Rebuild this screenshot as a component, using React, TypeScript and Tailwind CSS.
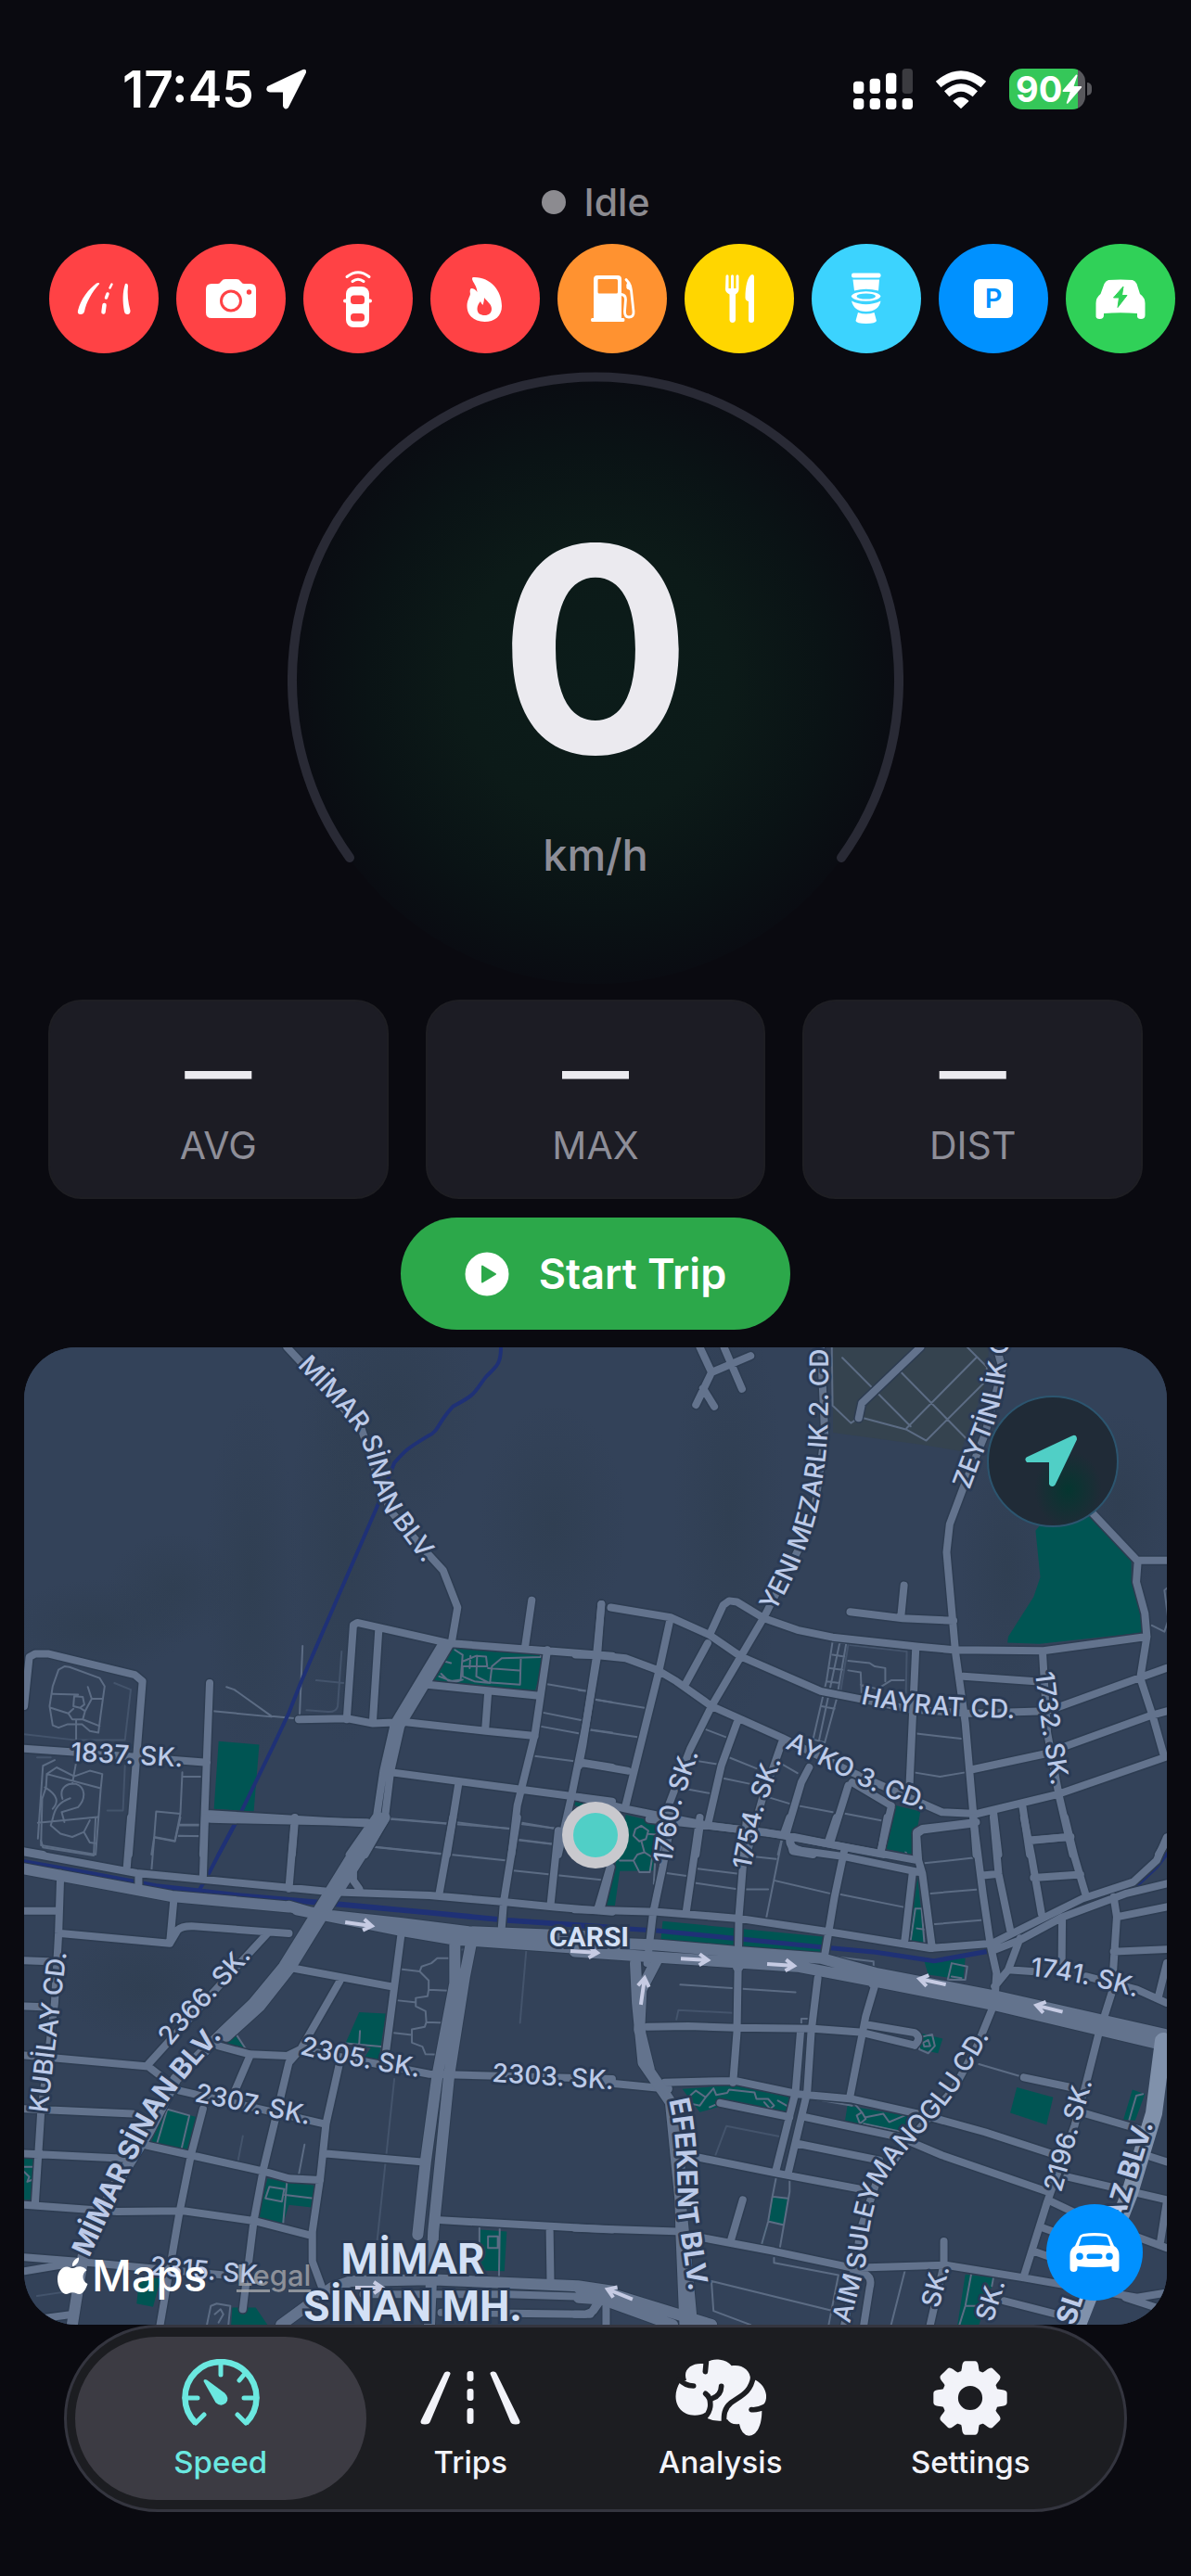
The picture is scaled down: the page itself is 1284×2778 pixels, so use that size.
import React from 'react';

interface MapTile {
  id: string;
  transform: string;
  areas: string;
  river: string;
  streets: string;
  wide: string;
  paths: string;
  faint: string;
}

interface RoadLabel {
  id: string;
  text: string;
  d: string;
  major?: boolean;
}

const tiles: MapTile[] = [
  {
    id: 'nw',
    transform: 'translate(-26 -13) scale(0.4209 0.3571)',
    areas:
      'M1160 942L1395 962L1370 1078L1110 1045Z M560 1226L664 1236L650 1438L548 1430Z M1470 1405L1495 1410L1495 1425L1470 1420Z',
    river:
      'M1283 36C1283 90 1270 95 1245 125C1215 170 1225 175 1160 215C1120 265 1125 290 1095 305C1040 345 1040 345 1010 385L965 520L770 1050L740 1140L700 1240L605 1470L560 1568',
    streets:
      'M735 36L762 70L925 280L965 420L1000 530L1100 665L1135 710L1172 822L1157 925 M888 1160L905 875L915 868L1150 930L1568 968 M970 890L955 1165 M765 1160L888 1157L955 1172L1035 1168L1245 1195L1370 1210 M1362 800L1345 940 M1540 812L1530 970L1500 1180L1465 1385L1430 1568 M1402 950L1370 1205L1325 1420L1310 1568 M1095 1055L1375 1088 M1250 1080L1243 1190 M990 1318L1325 1370L1568 1408 M1490 1290L1568 1305 M1175 1350L1145 1568 M62 1120L75 972L90 962L125 962L345 1025L365 1045L330 1568 M62 1248L180 1258L530 1290 M537 1050L520 1568 M530 1445L950 1475 M755 1470L748 1568 M62 1558L110 1568 M1130 935L1010 1170L982 1315L965 1450L895 1568 M1152 935L1027 1180L1000 1320L985 1465L935 1568',
    wide: '',
    paths:
      'M1165 950L1185 965L1180 1040L1150 1045L1130 1022 M1125 1030L1165 1048L1185 1040 M1185 985L1220 968L1245 970L1248 1000L1185 1000 M1205 968L1203 1005 M1222 968L1220 1030 M1185 1000L1185 1030L1215 1045L1255 1050L1260 1000L1285 975L1385 972L1385 962 M1220 1030L1250 1048L1332 1055L1334 978 M1250 1005L1330 1012 M1140 985L1155 990 M775 938L767 1160 M580 1062L600 1070L695 1150L765 1158 M545 1135L695 1152 M150 1010L165 1000L178 1002L255 1035L268 1060L258 1145L252 1200L230 1195L210 1175L172 1175L150 1185L135 1178L127 1120L135 1060Z M135 1083L200 1085 M190 1090L212 1092L216 1115L205 1125L188 1120Z M130 1125L175 1142L188 1128 M175 1142L185 1160L212 1160L218 1135L205 1125 M195 1160L195 1220 M225 1062L235 1098L218 1135 M235 1098L262 1098 M212 1160L255 1180 M140 1283L110 1300L97 1520 M120 1325L145 1305L190 1332L230 1315L262 1325L258 1370L245 1568 M120 1325L118 1365L108 1400L105 1540L245 1568 M120 1325L258 1368 M195 1290L185 1355 M160 1400C150 1365 175 1350 195 1355C220 1365 220 1400 200 1425L158 1440L165 1470 M180 1398C150 1410 140 1430 135 1460L130 1480L155 1505L185 1515L215 1500L230 1465 M115 1365C150 1390 150 1410 135 1430 M97 1472L250 1455 M215 1500L230 1532L243 1534 M467 1320L462 1445L400 1438L395 1515L448 1527L462 1445 M467 1333L525 1333 M460 1480L520 1480 M458 1512L520 1512 M395 1515L388 1568 M1395 1052L1508 1075 M1385 1138L1488 1162 M1380 1180L1485 1203 M1365 1270L1475 1287 M1525 1100L1568 1108 M1505 1190L1568 1200 M1000 1460L1310 1490 M955 1545L1145 1568 M1330 1475L1440 1492 M1325 1523L1430 1538',
    faint:
      'M875 955L865 1120Q862 1138 840 1137L785 1132 M810 1042L880 1050 M293 1050L335 1070L320 1222L190 1222L62 1205 M320 1300L315 1435L275 1435 M95 1275L130 1275',
  },
  {
    id: 'ne',
    transform: 'translate(598 -13) scale(0.4209 0.3571)',
    areas:
      'M1170 590L1200 545L1310 540L1415 670L1415 740L1440 840L1442 898L1180 932L1098 928L1100 910L1165 790L1182 730Z M805 1418L875 1438L855 1568L785 1550Z M120 1448L200 1470L190 1568L110 1568Z M0 1405L15 1412L0 1430Z',
    river: '',
    streets:
      'M310 36L340 112L440 62 M340 112L300 210 M318 160L347 215 M372 36L418 162 M620 36L630 300L600 560L475 850L415 970L340 1120L285 1250L230 1420L200 1568 M875 36L725 205L717 250 M1070 36L1085 100L1040 300L985 460L950 570L942 655L965 960L990 1170L1010 1440L1018 1568 M695 835L830 855L960 862 M833 755L825 850 M82 822L235 852L335 905L415 970L620 1075L720 1098L850 1130L1000 1142L1200 1135L1435 1035L1506 1005 M-8 965L50 967L120 975L200 1010L250 1045L340 1120L520 1215L700 1320L930 1440L1020 1445L1230 1385L1500 1275L1470 1150L1438 1035L1455 910 M58 812L45 970L10 1240L0 1300 M235 852L205 1015L120 1420 M335 905L370 815L385 802L405 805L475 855L560 890L650 912L870 940L960 950L1190 953L1455 910L1450 840L1428 745L1432 680L1506 680 M1430 680L1310 530 M330 930L270 1060 M863 945L847 1360 M1188 960L1200 1200L1230 1390L1265 1568 M985 1030L1170 1045 M1005 1312L1190 1265L1460 1150L1506 1135 M0 1290L125 1315 M0 1395L120 1430L330 1480L530 1510L700 1550L780 1568 M405 1170L365 1300L330 1480 M520 1230L470 1400L430 1568 M590 1305L570 1350L530 1510 M690 1360L645 1530 M310 1485L300 1568 M800 1425L775 1550 M700 1350L800 1420 M865 1568L865 1500L880 1490L1018 1470 M1062 1440L1075 1568 M1137 1425L1155 1568 M1155 1525L1255 1515 M1520 1500L1485 1568 M540 1520L548 1558L600 1568',
    wide: '',
    paths:
      'M675 68L850 275 M820 105L995 315 M1020 65L840 280 M1045 135L890 318L840 285L720 247L697 265L650 212L648 36 M995 36L1045 95L1045 130 M650 925L685 930L660 1100L630 1230L600 1220L635 1040Z M668 930L615 1225 M650 965L680 970 M643 1005L675 1010 M635 1045L668 1050 M622 1120L655 1128 M690 983L745 990L758 1000L785 1005L785 1045 M690 1012L722 1018L724 1078 M722 1055L765 1068L800 1042L833 1042 M40 1100L168 1125 M20 1190L150 1213 M0 1072L20 1075 M318 1187L380 1215 M385 1275L455 1308 M370 1338L440 1355 M300 1285L355 1295 M275 1370L335 1383 M520 1295L560 1322 M485 1395L550 1418L650 1440 M675 1443L775 1465 M865 1203L980 1218 M858 1320L925 1333L990 1320 M1510 760L1500 770L1510 860L1500 895L1468 876 M150 1490L165 1485L175 1500L168 1520L150 1522L142 1505Z M175 1508L195 1508 M160 1522L168 1560 M520 1520L510 1568 M790 1502L818 1508L840 1568',
    faint: 'M695 935L840 955L838 1080 M690 935L670 1080',
  },
  {
    id: 'sw',
    transform: 'translate(-26 507) scale(0.4209 0.3571)',
    areas:
      'M920 588L988 592L970 735L935 722L950 695L885 682Z M600 655L630 700L575 690Z M425 880L505 905L490 1008L385 985Z M685 1090L808 1112L803 1178L740 1170L725 1228L660 1210Z M62 1027L88 1027L82 1155L62 1155Z M1230 1245L1298 1250L1292 1370L1228 1368Z M355 1410L398 1370L410 1400L392 1478L350 1468Z M595 1480L655 1480L685 1532L592 1532Z M1568 170L1545 270L1568 270Z',
    river:
      'M605 10L530 180L510 220 M62 132L230 167L400 205L600 232L860 258L1100 285L1300 308L1568 330 M62 137L230 172L400 210L600 237L860 264L1100 290L1300 313L1568 334',
    streets:
      'M62 105L350 168L740 212L850 225L1100 235L1290 255L1420 270L1568 285 M335 0L325 150 M355 170L355 215 M525 0L520 180 M755 0L740 215 M540 5L940 15 M1160 0L1125 230 M1325 0L1290 255L1285 330 M1430 40L1410 265 M1565 150L1540 270 M155 170L150 350L140 560L105 890L90 1165 M62 282L145 282 M155 350L435 380L455 340Q465 328 490 328L740 350 M445 250L435 380 M685 350L560 510L380 745 M62 432L125 435 M62 570L110 572 M62 718L380 752L460 825L830 925 M62 880L340 895 M62 1015L320 1030 M62 1170L300 1190L470 1188L650 1218L795 1262 M62 1328L190 1340L600 1385 M62 1370L190 1345 M62 1520L190 1500 M750 455L1000 510 M870 495L770 700L740 740L675 1060L650 1218L622 1485 M1030 330L985 740 M870 740L835 925L820 1090L800 1250L800 1340L825 1420 M560 690L640 715L735 720L770 700L1100 775L1568 790 M640 720L600 830 M520 880L490 1015L460 1190L410 1532 M375 990L490 1020L680 1070L740 1090L820 1095 M835 1015L1080 1040 M1115 1215L1568 1245 M1408 1250L1410 1395 M930 1440L1300 1440L1568 1450 M1130 1495L1500 1500L1520 1490L1535 1465 M905 150L905 190L920 215',
    wide: 'M62 155L440 238L740 270 M740 268L810 292L1030 320L1200 345L1568 362 M760 278L1030 342L1160 368L1568 402 M970 0L895 130L840 235L727 450L650 560L570 650L450 790L380 950L290 1120L215 1310L185 1532 M985 0L905 150L855 240L745 450L665 570L580 660 M1165 345L1165 500L1120 780L1090 1040L1070 1260 M1210 360L1190 480L1150 780L1110 1250L1100 1532 M720 1532L850 1420L900 1400L1100 1395L1480 1415L1568 1430',
    paths:
      'M245 0L240 115L110 90L105 70 M395 60L388 160 M395 60L448 72L462 0 M460 22L520 22 M458 55L520 57 M1025 458L1075 465L1080 450L1105 440L1120 425L1155 425 M1075 465L1098 492L1098 520L1148 523 M1098 520L1095 540L1065 545L1065 570L1090 585L1092 618L1140 620 M1015 552L1062 558 M1092 618L1088 632L1055 640L1055 680L1082 692L1090 715L1125 716 M1003 650L1055 657 M780 988L765 1080 M955 88L1300 130 M1000 5L1160 20 M1170 15L1310 35 M1330 15L1430 35 M1325 68L1425 82 M1315 160L1540 188 M885 682L975 692 M922 645L920 685 M428 882L402 985 M425 880L485 900L465 1000 M735 1100L725 1228 M730 1140L803 1150 M690 1115L728 1122L722 1160L680 1150Z M62 1055L88 1055 M62 1070L75 1085L70 1100L88 1092 M605 655L630 700 M1228 1240L1228 1368 M1280 1240L1278 1395 M1250 1265L1275 1265L1275 1300L1250 1300Z M530 1532L540 1475L555 1468L590 1475L585 1532 M550 1500L565 1485L572 1500L560 1525',
    faint:
      'M1348 400L1332 620 M1010 790L965 1290 M622 962L610 1035 M1180 400L1210 395L1235 380 M95 1445L170 1432',
  },
  {
    id: 'se',
    transform: 'translate(598 507) scale(0.4209 0.3571)',
    areas:
      'M215 313L625 360L620 408L210 372Z M130 0L200 20L190 160L105 162L92 270L62 265Z M797 0L870 0L850 105L785 95Z M868 180L885 380L845 370Z M885 435L990 425L985 490L895 475Z M870 650L932 668L920 712L875 700Z M265 820L400 808L540 845L530 890L400 860L310 890Z M688 870L860 905L820 955L682 915Z M1122 815L1215 845L1198 928L1105 892Z M1418 822L1450 835L1425 915L1395 912Z M497 1145L535 1150L523 1232L487 1220Z M478 1235L483 1237L470 1290Z M990 1380L1065 1390L1025 1532L970 1532Z',
    river:
      'M-10 325L200 340L620 390L760 405L910 432L1060 400L1290 258L1430 205L1480 150L1506 110 M-10 328L200 343L620 393L760 408L910 435L1060 403',
    streets:
      'M-10 278L200 285L410 305L640 345L900 395L1060 380L1290 245L1420 195L1480 130L1506 60 M1065 400L1130 370L1240 300L1400 230L1506 200 M240 -10L215 150L190 290L175 440 M310 0L275 285 M430 0L410 300L408 440 M180 5L480 45L870 130 M540 70Q540 92 570 100L680 118L870 165 M540 0L525 50 M660 0L640 70 M680 100L655 240L630 415 M80 150L50 270 M855 165L835 370 M865 50L870 130L880 170L905 395 M865 50L880 38L1010 18 M790 0L775 95 M1010 0L1035 230L1055 390L1070 470L1065 560L1020 690L960 820L850 970L760 1110L720 1250L705 1400L680 1532 M1062 0L1075 170L1105 340 M1035 175L1075 170 M1140 0L1160 120L1185 290 M1245 0L1270 120L1300 240 M1155 70L1260 58 M1165 182L1285 172 M1370 240L1378 300L1365 530L1330 660L1300 800L1270 930L1200 1160L1140 1385 M1380 300L1506 270 M1370 405L1506 398 M1238 305L1237 435 M1130 365L1100 460L1065 510 M1100 460L1160 465 M1300 480L1430 520L1506 560 M1506 440L1485 540 M175 632L280 630L400 635L600 638L720 648L860 688 M735 625L860 650Q880 665 860 688 M408 440L405 650L395 800 M612 485L595 650L585 830L535 1080 M568 645L555 830L505 1065 M760 500L735 600L695 840 M220 800L400 795L560 835L700 850L870 895L1040 950L1210 1015 M362 862L540 905 M580 905L820 965L930 1020L1200 1130 M60 800L230 820 M560 985L770 1035 M300 1025L510 1075L720 1122 M420 1155L390 1275 M-10 1240L250 1250 M320 1270L500 1310L700 1360L940 1352L1140 1390L1430 1450L1506 1435 M935 1280L935 1350L900 1532 M1210 1160L1300 1210L1506 1300 M1165 1310L1250 1345 M1190 1240L1250 1265 M1250 1085L1506 1155 M1300 895L1460 950 M1440 1015L1506 1040 M1140 785L1260 815 M1506 1160L1490 1280 M1090 1460L1290 1520 M1400 1450L1506 1490 M700 1380L735 1380Q752 1390 745 1420L730 1532 M-10 1500L30 1500L55 1450 M70 1465L70 1532',
    wide: 'M-10 375L200 385L400 405L620 425L760 470L1070 540L1500 655 M-10 405L240 425L560 450L740 490L1060 565L1490 685 M1070 555L1495 670 M145 440L150 560L165 740L235 860L268 1250L290 1532 M200 430L160 520L155 640L180 760 M255 900L262 1250L272 1532 M0 1420L60 1430L340 1532 M0 1450L60 1455L240 1532 M408 410L408 450 M755 470L755 500',
    paths:
      'M260 505L555 528 M520 70L480 305 M500 190L645 230 M668 232L838 272 M305 155L410 170 M300 198L410 217L485 217 M450 118L505 125 M225 168L280 177 M885 138L1010 122 M895 230L1018 218 M905 323L1030 310 M340 1400L650 1490 M340 1405L345 1490L440 1532 M500 1330L500 1345L665 1382L640 1532 M835 1370L800 1532 M1025 745L1140 785 M650 420L755 435L755 460 M505 1090L495 1150L485 1220L468 1290 M540 1095L540 1130L515 1300 M497 1145L535 1150 M487 1220L523 1230 M570 630L570 608L588 608 M145 35L160 25L178 40L172 65L155 72L140 55Z M178 50L198 52 M160 70L168 105 M140 130L150 112L168 105L188 120L182 165L155 165Z M105 130L140 130 M195 140L192 200 M285 840L300 825L325 845L310 870L290 865Z M325 845L345 818L352 838L380 832L385 822L450 830L455 850L485 850L500 870L490 880L475 860 M510 855L535 872 M335 875L355 865 M700 855L725 890L735 910L720 925L712 900L725 890 M735 905L780 895L795 920L835 900 M730 925L830 950 M655 912L720 930 M600 850L700 870 M870 665L905 655L912 690L895 712L872 700Z M882 680L895 672L900 690L885 692Z M945 490L955 440L995 450L990 490Z M955 480L980 485 M862 275L850 370 M862 275L878 275L885 380 M866 335L885 338 M1445 835L1428 840L1410 912 M1005 1380L990 1475L975 1532 M990 1475L1020 1475 M1062 1390L1058 1415',
    faint: 'M250 610L255 582L395 590 M350 1020L378 932L520 965 M238 405L238 385 M615 440L615 455',
  },
];

const roadLabels: RoadLabel[] = [
  { id: 'mimar', text: 'MİMAR SİNAN BLV.', d: 'M294 20C335 62 356 84 365 104C376 134 378 164 394 184L445 252' },
  { id: 's1837', text: '1837. SK.', d: 'M50 446L240 456' },
  { id: 'yeni', text: 'YENI MEZARLIK 2. CD', d: 'M809 286C836 240 856 190 861 140C868 100 867 60 867 -40' },
  { id: 'zeytin', text: 'ZEYTİNLİK CD.', d: 'M1019 154L1040 98Q1060 50 1064 -40' },
  { id: 'hayrat', text: 'HAYRAT CD.', d: 'M902 384Q960 400 1120 401' },
  { id: 'ayko', text: 'AYKO 3. CD.', d: 'M820 432L890 466Q930 488 1010 512' },
  { id: 's1732', text: '1732. SK.', d: 'M1090 351L1097 408L1115 520' },
  { id: 's1760', text: '1760. SK.', d: 'M698 557L706 500L745 385' },
  { id: 's1754', text: '1754. SK.', d: 'M783 564L795 505L840 380' },
  { id: 'kubilay', text: 'KUBİLAY CD.', d: 'M25 826L52 600' },
  { id: 's2366', text: '2366. SK.', d: 'M158 754C180 725 210 700 270 628' },
  { id: 's2305', text: '2305. SK.', d: 'M297 762Q360 778 460 792' },
  { id: 's2303', text: '2303. SK.', d: 'M504 792L680 803' },
  { id: 's2307', text: '2307. SK.', d: 'M183 813L350 847' },
  { id: 's2315', text: '2315. SK.', d: 'M135 1000L300 1014' },
  { id: 's1741', text: '1741. SK.', d: 'M1085 678Q1140 682 1230 710' },
  { id: 's2196', text: '2196. SK.', d: 'M1118 912L1137 842L1170 730' },
  { id: 'suley', text: 'AIM SULEYMANOGLU CD.', d: 'M890 1053L907 989C912 930 920 905 947 871C975 840 1000 812 1016 785L1060 710' },
  { id: 'sk1', text: 'SK.', d: 'M986 1037L1006 960' },
  { id: 'sk2', text: 'SK.', d: 'M1044 1052L1070 970' },
  { id: 'mimar2', text: 'MİMAR SİNAN BLV.', d: 'M70 982L119 877C150 815 160 800 240 715', major: true },
  { id: 'efekent', text: 'EFEKENT BLV.', d: 'M695 812Q705 850 705 936L722 1053', major: true },
  { id: 'az', text: 'AZ BLV.', d: 'M1184 946L1232 790', major: true },
  { id: 'sl', text: 'SL', d: 'M1132 1056L1160 970', major: true },
];

const trafficArrows = [
  { x: 723, y: 660, angle: 3 },
  { x: 816, y: 666, angle: 4 },
  { x: 979, y: 684, angle: 192 },
  { x: 1105, y: 713, angle: 194 },
  { x: 667, y: 694, angle: -82 },
  { x: 361, y: 622, angle: 8 },
  { x: 604, y: 652, angle: 4 },
  { x: 372, y: 1014, angle: 0 },
  { x: 642, y: 1021, angle: 202 },
];

const hazardIcons = {
  road: (
    <g fill="none" stroke="#fff" strokeLinecap="round">
      <path d="M51 42.5q3-1 3.3.5C46 52 40 63 38 73q-1 3-4 3q-4 0-3-4C34 60 42 49 51 42.5z" fill="#fff" stroke="none" />
      <path d="M82 43q2.5-1 3 2C84 54 85 63 87.5 72q0 4-3 4q-3 0-3.5-3C79 62 79 52 82 43z" fill="#fff" stroke="none" />
      <path d="M67.5 43.5L65.5 47.5" strokeWidth="2.5" />
      <path d="M63 54L61.5 58" strokeWidth="3.5" />
      <path d="M59.5 66L58.5 73.5" strokeWidth="4.5" />
    </g>
  ),
  camera: (
    <>
      <path
        d="M38 43h7q2 0 3-2l1-1q1-2 4-2h12q3 0 4 2l1 1q1 2 3 2h7q6 0 6 6v25q0 6-6 6H38q-6 0-6-6V49q0-6 6-6z"
        fill="#fff"
      />
      <circle cx="59" cy="61.5" r="10.5" fill="none" stroke="#ff4245" strokeWidth="3" />
      <circle cx="78.5" cy="52" r="2.7" fill="#ff4245" />
    </>
  ),
  radar: (
    <>
      <g fill="none" stroke="#fff" strokeWidth="3" strokeLinecap="round">
        <path d="M53 40.5Q59 36 65 40.5" />
        <path d="M47 35.5Q59 26 71 35.5" />
      </g>
      <rect x="46" y="46" width="25" height="44" rx="8" fill="#fff" />
      <rect x="43" y="59.5" width="31" height="4" rx="2" fill="#fff" />
      <rect x="51" y="55.5" width="15" height="9.5" rx="3.5" fill="#ff4245" />
      <rect x="51" y="75" width="15" height="8.5" rx="3.5" fill="#ff4245" />
    </>
  ),
  flame: (
    <path
      fillRule="evenodd"
      fill="#fff"
      d="M46 36C64 35 77 50 77 67C77 78 69 84 58.5 84C47 84 39.5 77 39.5 67C39.5 61 42.5 57 43 54Q42 49 44 48Q48 48 50.5 52C50 45 46 42 45 38Q45 36 46 36zM58 58C58 62 57 64 56.5 66Q54.5 64 54 62C52 64 50.5 67 50.5 70C50.5 75 54 77 58.5 77C63 77 66 74.5 66 70C66 65 61 62 58 58z"
    />
  ),
  fuel: (
    <>
      <path
        fillRule="evenodd"
        fill="#fff"
        d="M43 34H65Q69 34 69 38V80H71Q72.5 80 72.5 82T71 84H37.5Q36 84 36 82T37.5 80H39V38Q39 34 43 34zM44.5 38Q43.5 38 43.5 39V52Q43.5 53.5 45 53.5H63.5Q65 53.5 65 52V39.5Q65 38 63.5 38z"
      />
      <path
        d="M69 54.5Q73.5 55 73.5 60L72.5 73Q72.5 79 77 79Q82.5 79 82 73L79.5 50Q79 45 77 42L74 38.5"
        fill="none"
        stroke="#fff"
        strokeWidth="2.8"
        strokeLinecap="round"
      />
      <path d="M76 41L79 50L75 48Q74 44 76 41z" fill="#fff" stroke="#fff" />
    </>
  ),
  food: (
    <>
      <path
        d="M44.5 34.5Q46 32 47.5 34.5V48H50V34.5Q51.5 32 53 34.5V48H55.5V34.5Q57 32 58.5 34.5V49Q58.5 52 55 54.5V82Q54.5 85 51.7 85T48.5 82V54.5Q44 52 44 49z"
        fill="#fff"
      />
      <path d="M73 33Q75 33 75 36V82Q75 85 72 85T69 82V62Q65.5 61 65.5 58C65.5 46 68 34 73 33z" fill="#fff" />
    </>
  ),
  toilet: (
    <g fill="#fff">
      <rect x="43" y="31.5" width="31.5" height="5" rx="2" />
      <path d="M44.5 38.5H73L72 50.5Q58.5 47 46 50.5z" />
      <path fillRule="evenodd" d="M42.7 56.5A16 6 0 0 1 74.5 56.5A16 6 0 0 1 42.7 56.5zM48.5 56.5A10 3 0 0 0 69 56.5A10 3 0 0 0 48.5 56.5z" />
      <path d="M43 61.5Q58.5 69 74.5 61.5C73 69 68 73 58.7 73S45 69 43 61.5z" />
      <path d="M50 74Q58.7 77 67.5 74L70 83Q69 86 58.7 86T47.5 83z" />
    </g>
  ),
  parking: (
    <>
      <rect x="38" y="38" width="42" height="42" rx="6" fill="#fff" />
      <text x="59" y="69" textAnchor="middle" fontSize="29" fontWeight="600" fill="#0091ff">
        P
      </text>
    </>
  ),
  charger: (
    <>
      <path
        d="M46 39Q59 38 72 39Q75 40 76.5 43L80 54Q85.5 58 85.5 64V77Q85.5 81 81 81T77 77V75Q59 73.5 41 75V77Q41 81 36.5 81T32.5 77V64Q32.5 58 37.5 54L41.5 43Q43 40 46 39z"
        fill="#fff"
      />
      <path d="M62 46L51.5 58H57.5L56 68.5L66 55.5H60.5z" fill="#30d158" stroke="#30d158" strokeLinejoin="round" />
    </>
  ),
};

const hazards = [
  { label: 'Road hazard', icon: hazardIcons.road, color: 'bg-[#ff4245]' },
  { label: 'Speed camera', icon: hazardIcons.camera, color: 'bg-[#ff4245]' },
  { label: 'Radar', icon: hazardIcons.radar, color: 'bg-[#ff4245]' },
  { label: 'Fire', icon: hazardIcons.flame, color: 'bg-[#ff4245]' },
  { label: 'Fuel', icon: hazardIcons.fuel, color: 'bg-[#ff9230]' },
  { label: 'Food', icon: hazardIcons.food, color: 'bg-[#ffd600]' },
  { label: 'Restroom', icon: hazardIcons.toilet, color: 'bg-[#3cd3fe]' },
  { label: 'Parking', icon: hazardIcons.parking, color: 'bg-[#0091ff]' },
  { label: 'Charging', icon: hazardIcons.charger, color: 'bg-[#30d158]' },
];

function StatusBar() {
  return (
    <header className="flex h-48 items-center justify-between pl-[132px] pr-[107px] text-white">
      <div className="flex items-center gap-3">
        <span className="text-[55px] leading-[64px] font-semibold">17:45</span>
        <svg className="h-[44px] w-[45px]" viewBox="0 0 45 44" aria-hidden="true">
          <path d="M41 2L3 20Q1 24 5 24.5H20V40Q21 44 24 41.5L43 4Q43.5 1 41 2z" fill="#fff" stroke="#fff" strokeWidth="2" strokeLinejoin="round" />
        </svg>
      </div>
      <div className="flex items-center gap-6">
        <svg className="h-[44px] w-[64px]" viewBox="63 39 192 132" aria-label="Signal">
          <g fill="#fff">
            <rect x="63" y="80" width="34" height="40" rx="11" />
            <rect x="116" y="71" width="34" height="49" rx="11" />
            <rect x="168" y="53" width="34" height="67" rx="11" />
            <rect x="63" y="135" width="34" height="36" rx="11" />
            <rect x="116" y="135" width="34" height="36" rx="11" />
            <rect x="168" y="135" width="34" height="36" rx="11" />
            <rect x="221" y="135" width="34" height="36" rx="11" />
          </g>
          <rect x="221" y="39" width="34" height="81" rx="11" fill="#3b3b40" />
        </svg>
        <svg className="h-[42px] w-[56px]" viewBox="325 40 168 126" aria-label="Wi-Fi">
          <path d="M336 88Q409 26 482 88" fill="none" stroke="#fff" strokeWidth="26" />
          <path d="M363 119Q409 78 455 119" fill="none" stroke="#fff" strokeWidth="24" />
          <path d="M386 142Q409 120 432 142L409 164Z" fill="#fff" stroke="#fff" strokeWidth="4" strokeLinejoin="round" />
        </svg>
        <div className="flex items-center gap-[2px]">
          <div className="flex h-[44px] w-[82px] items-center overflow-hidden rounded-[14px] bg-linear-to-r from-[#35c759] from-90% to-[#58585d] to-90% pl-[7px]">
            <span className="text-[38px] leading-[44px] font-bold">90</span>
            <svg className="h-[32px] w-[22px] shrink-0" viewBox="737 64 60 90" aria-hidden="true">
              <path d="M780 68L740 115H764L752 151L793 103H768z" fill="#fff" stroke="#fff" strokeWidth="5" strokeLinejoin="round" />
            </svg>
          </div>
          <span className="h-[14px] w-[5px] rounded-r-full bg-[#58585d]" />
        </div>
      </div>
    </header>
  );
}

function HazardRow() {
  return (
    <div className="flex gap-[19px] overflow-hidden px-[53px]">
      {hazards.map(({ label, icon, color }) => (
        <button key={label} type="button" aria-label={label} className={`size-[118px] shrink-0 rounded-full ${color}`}>
          <svg className="size-full" viewBox="0 0 118 118" aria-hidden="true">
            {icon}
          </svg>
        </button>
      ))}
    </div>
  );
}

function Speedometer() {
  return (
    <section className="relative mx-auto mt-5 flex size-[664px] flex-col items-center pt-[145px]">
      <svg className="absolute inset-0 size-full" viewBox="0 0 664 664" aria-hidden="true">
        <defs>
          <radialGradient id="glow">
            <stop offset="0" stopColor="#0c1c1a" />
            <stop offset="0.45" stopColor="#0c1a18" />
            <stop offset="0.75" stopColor="#0a1315" />
            <stop offset="1" stopColor="#0a0c12" />
          </radialGradient>
        </defs>
        <circle cx="332" cy="332" r="328" fill="url(#glow)" />
        <path d="M67 524A327 327 0 1 1 597 524" fill="none" stroke="#292a35" strokeWidth="10" strokeLinecap="round" />
      </svg>
      <span className="relative text-[308px] leading-[308px] font-bold text-[#ebeaef]">0</span>
      <span className="relative mt-11 text-[47px] leading-[48px] font-medium text-[#8e8e98]">km/h</span>
    </section>
  );
}

function StatCard({ label, value }: { label: string; value: string }) {
  return (
    <div className="flex flex-1 flex-col items-center rounded-[36px] border-2 border-[#1e1e23] bg-[#1c1c24] pt-[39px] pb-8">
      <span className="text-[72px] leading-[72px] font-bold text-[#ebeaef]">{value}</span>
      <span className="mt-5 text-[41px] leading-[48px] text-[#8e8e98]">{label}</span>
    </div>
  );
}

function MapCanvas() {
  return (
    <svg className="absolute inset-0 size-full" viewBox="0 0 1232 1054" preserveAspectRatio="xMidYMid slice" role="img" aria-label="Map">
      <defs>
        <radialGradient id="shade">
          <stop offset="0" stopColor="#2d3c4c" stopOpacity="0.5" />
          <stop offset="0.5" stopColor="#2d3c4c" stopOpacity="0.25" />
          <stop offset="1" stopColor="#2d3c4c" stopOpacity="0" />
        </radialGradient>
        {roadLabels.map(({ id, d }) => (
          <path key={id} id={`label-${id}`} d={d} />
        ))}
      </defs>
      <rect width="1232" height="1054" fill="#334259" />
      <g fill="url(#shade)">
        <ellipse cx="160" cy="260" rx="70" ry="60" />
        <ellipse cx="80" cy="300" rx="100" ry="50" />
        <ellipse cx="245" cy="250" rx="50" ry="200" />
        <ellipse cx="345" cy="210" rx="60" ry="220" />
        <ellipse cx="400" cy="60" rx="90" ry="140" />
        <ellipse cx="760" cy="180" rx="60" ry="230" />
        <ellipse cx="570" cy="190" rx="80" ry="130" />
        <ellipse cx="1060" cy="240" rx="50" ry="140" />
        <ellipse cx="1180" cy="170" rx="60" ry="100" />
        <ellipse cx="130" cy="690" rx="90" ry="60" />
      </g>
      <path d="M872 0H1040L1038 34L1010 112L968 105L872 92Z" fill="#35434f" />
      <g fill="none" strokeLinejoin="round" strokeLinecap="round">
        {tiles.map((tile) => (
          <g key={tile.id} transform={tile.transform}>
            <path d={tile.areas} fill="#005553" />
            <path d={tile.faint} stroke="#44546c" strokeWidth="2" vectorEffect="non-scaling-stroke" />
            <path d={tile.paths} stroke="#5c6c84" strokeWidth="2" vectorEffect="non-scaling-stroke" />
            <path d={tile.river} stroke="#1f3176" strokeWidth="4" vectorEffect="non-scaling-stroke" />
          </g>
        ))}
        {tiles.map((tile) => (
          <g key={tile.id} transform={tile.transform} stroke="#2d3c51">
            <path d={tile.streets} strokeWidth="11" vectorEffect="non-scaling-stroke" />
            <path d={tile.wide} strokeWidth="14" vectorEffect="non-scaling-stroke" />
          </g>
        ))}
        {tiles.map((tile) => (
          <g key={tile.id} transform={tile.transform} stroke="#63738d">
            <path d={tile.streets} strokeWidth="8" vectorEffect="non-scaling-stroke" />
            <path d={tile.wide} strokeWidth="12" vectorEffect="non-scaling-stroke" />
          </g>
        ))}
        <path d="M1228 748L1218 826L1192 912L1136 1054" stroke="#8091ab" strokeWidth="18" />
      </g>
      <g fill="none" stroke="#c6cbe3" strokeWidth="4">
        {trafficArrows.map(({ x, y, angle }) => (
          <path key={`${x}-${y}`} d="M-15 0H12M5 -6L14 0L5 6" transform={`translate(${x} ${y}) rotate(${angle})`} />
        ))}
      </g>
      <g fill="#bccae8" stroke="#2a3a54" strokeWidth="6" strokeLinejoin="round" className="[paint-order:stroke]">
        {roadLabels.map(({ id, text, major }) => (
          <text key={id} fontSize={major ? 30 : 28} fontWeight={major ? 700 : 500}>
            <textPath href={`#label-${id}`}>{text}</textPath>
          </text>
        ))}
      </g>
      <g
        fill="#d3e0f5"
        stroke="#2a3a54"
        strokeWidth="6"
        textAnchor="middle"
        fontWeight="700"
        className="font-['Roboto',sans-serif] [paint-order:stroke]"
      >
        <text x="609" y="646" fontSize="30">
          CARSI
        </text>
        <text x="419" y="999" fontSize="46">
          MİMAR
        </text>
        <text x="419" y="1050" fontSize="46">
          SİNAN MH.
        </text>
      </g>
      <circle cx="616" cy="526" r="36" fill="#c9c9ce" />
      <circle cx="616" cy="526" r="24" fill="#50cfc6" />
    </svg>
  );
}

function MapPanel() {
  return (
    <section className="relative mx-[26px] mt-[19px] aspect-[1232/1054] overflow-hidden rounded-[56px] bg-[#334259]">
      <MapCanvas />
      <button
        type="button"
        aria-label="Recenter"
        className="absolute top-[52px] right-[52px] flex size-[142px] items-center justify-center rounded-full border-2 border-[#2c556f] bg-[#1f2b37] bg-radial-[at_62%_72%] from-[#053630] to-[#202b37] to-30% pr-1"
      >
        <svg className="size-[60px]" viewBox="0 0 60 60" aria-hidden="true">
          <path d="M54 4L5 27Q4 28 5 29H30V54Q31 56 33 54L56 6Q56 3 54 4z" fill="#50cfc6" stroke="#50cfc6" strokeWidth="4" strokeLinejoin="round" />
        </svg>
      </button>
      <button
        type="button"
        aria-label="Vehicle"
        className="absolute right-[26px] bottom-[26px] flex size-[104px] items-center justify-center rounded-full bg-[#0091ff]"
      >
        <svg className="h-[42px] w-[54px]" viewBox="0 0 54 42" aria-hidden="true">
          <path
            fillRule="evenodd"
            fill="#fff"
            d="M15 1Q27-1 39 1Q43 2 44 5L48 14Q53.5 17 53.5 24V38Q53.5 42 49.5 42T45.5 38V36Q27 38 8.5 36V38Q8.5 42 4.500 42T.5 38V24Q.5 17 6 14L10 5Q11 2 15 1zM15 4Q13 4 12.5 6L10 14Q27 12 44 14L41.5 6Q41 4 39 4Q27 2.5 15 4zM11 21.5A3.8 3.8 0 1 0 11 29.1A3.8 3.8 0 1 0 11 21.5zM43 21.5A3.8 3.8 0 1 0 43 29.1A3.8 3.8 0 1 0 43 21.5zM21 22.5Q18.5 22.5 18.5 25.3T21 28H33Q35.5 28 35.5 25.3T33 22.5z"
          />
        </svg>
      </button>
      <div className="absolute bottom-[30px] left-[35px] flex items-center text-white">
        <svg className="h-[41px] w-[34px]" viewBox="0 0 34 41" aria-hidden="true">
          <path
            fill="#fff"
            d="M17 12C20 12 22 10 25.5 10.3C28.5 10.5 31 12 32.5 14.3C26.5 18 27.5 26.5 33.5 29C31.5 34.5 28.5 40 24.5 40C21.5 40 20.5 38.3 17.3 38.3C14 38.3 13 40 10 40C5.500 40 1 31.5 1 24C1 16 5.500 10.5 11 10.5C13.5 10.5 15 12 17 12zM17 10C16.5 5.500 20 1.5 24 .5C24.8 5 21 9.8 17 10z"
          />
        </svg>
        <span className="ml-1 text-[47px] leading-[46px] font-medium">Maps</span>
        <a href="#legal" className="ml-8 text-[31px] leading-[46px] font-medium text-[#a5a7ab]/80 underline decoration-3 underline-offset-4">
          Legal
        </a>
      </div>
    </section>
  );
}

function GaugeIcon() {
  return (
    <svg className="h-[84px] w-[84px]" viewBox="0 0 84 84" aria-hidden="true">
      <g fill="none" stroke="currentColor" strokeWidth="6" strokeLinecap="butt">
        <path d="M15 69A38.5 38.5 0 1 1 69 69" strokeWidth="6.5" />
        <path d="M42 4V17M3 42H17M67 42H81" strokeLinecap="round" strokeWidth="5" />
        <path d="M67 17L62 23M15 69L24 60M69 69L60 60" strokeLinecap="round" strokeWidth="5" />
      </g>
      <path d="M23.5 24Q23.5 21 27 22.5L46 36.5Q52 42 47.5 47.5Q42 52 36.5 47Z" fill="currentColor" />
    </svg>
  );
}

function TripsIcon() {
  return (
    <svg className="h-[58px] w-[108px]" viewBox="0 0 108 58" aria-hidden="true">
      <g fill="currentColor">
        <path d="M26 2Q27 0 30 .5Q33 1 32.5 3L11 54Q10 57.5 5 57.5Q-1 57.5 1 53z" />
        <path d="M82 2Q81 0 78 .5Q75 1 75.5 3L97 54Q98 57.5 103 57.5Q109 57.5 107 53z" />
        <rect x="50.5" y="0" width="7" height="11" rx="3" />
        <rect x="50.5" y="19" width="7" height="13" rx="3" />
        <rect x="50.5" y="40" width="7" height="17" rx="3" />
      </g>
    </svg>
  );
}

function BrainIcon() {
  return (
    <svg className="h-[84px] w-[98px]" viewBox="82 40 294 252" aria-hidden="true">
      <path
        fill="currentColor"
        d="M176 56C192 44 205 40 226 42Q250 44 264 62C300 56 328 78 325 112L342 108C380 128 388 178 358 196L362 208C362 255 346 288 320 288Q296 286 289 250Q262 254 250 235L232 240Q205 242 182 230L178 214Q165 222 145 222C85 222 68 160 98 114L118 108C104 72 140 50 176 56z"
      />
      <g fill="none" stroke="#1c1d21" strokeWidth="17" strokeLinecap="round">
        <path d="M182 50L179 81" />
        <path d="M96 106Q112 126 141 127" />
        <path d="M180 152Q198 165 195 195Q192 215 176 230" />
        <path d="M231 128Q230 158 201 168" />
        <path d="M334 98C326 150 290 160 262 182C240 200 238 220 240 250" />
        <path d="M328 204Q350 206 372 194" />
      </g>
    </svg>
  );
}

function SettingsIcon() {
  return (
    <svg className="h-[80px] w-[80px]" viewBox="-119 -119 238 238" aria-hidden="true">
      <circle r="72" fill="none" stroke="currentColor" strokeWidth="38" />
      <circle r="50" fill="none" stroke="currentColor" strokeWidth="22" />
      {[0, 45, 90, 135, 180, 225, 270, 315].map((angle) => (
        <path
          key={angle}
          d="M-34 -76Q-28 -82 -26 -104Q-24 -118 -15 -118H15Q24 -118 26 -104Q28 -82 34 -76z"
          fill="currentColor"
          transform={`rotate(${angle})`}
        />
      ))}
    </svg>
  );
}

const tabs = [
  { label: 'Speed', icon: <GaugeIcon />, active: true },
  { label: 'Trips', icon: <TripsIcon />, active: false },
  { label: 'Analysis', icon: <BrainIcon />, active: false },
  { label: 'Settings', icon: <SettingsIcon />, active: false },
];

function TabBar() {
  return (
    <nav className="mx-[69px] flex h-[202px] rounded-full border-3 border-[#34353f] bg-[#1c1d21] px-[31px] py-[10px]">
      {tabs.map(({ label, icon, active }) => (
        <button
          key={label}
          type="button"
          aria-current={active ? 'page' : undefined}
          className={`relative flex flex-1 flex-col items-center pt-6 ${active ? 'text-[#6be8e0]' : 'text-[#f2f3f9]'}`}
        >
          {active && <span className="absolute inset-y-0 -inset-x-[22px] rounded-full bg-[#3c3b43]" />}
          <span className="relative flex h-[84px] items-center">{icon}</span>
          <span className="relative mt-[7px] text-[33px] leading-[40px] font-medium">{label}</span>
        </button>
      ))}
    </nav>
  );
}

export default function App() {
  return (
    <div className="min-h-screen bg-[#0a0a10] pb-[69px] font-['Inter',sans-serif]">
      <StatusBar />
      <main>
        <div className="mb-[19px] flex h-[52px] items-center justify-center gap-5 text-[#8c8b90]">
          <span className="size-[26px] rounded-full bg-current" />
          <span className="text-[41px] leading-[52px] font-medium">Idle</span>
        </div>
        <HazardRow />
        <Speedometer />
        <section className="mt-[13px] flex gap-10 px-[52px]">
          <StatCard label="AVG" value="—" />
          <StatCard label="MAX" value="—" />
          <StatCard label="DIST" value="—" />
        </section>
        <button
          type="button"
          className="mx-auto mt-5 flex h-[121px] items-center gap-8 rounded-full bg-[#2ca84a] px-[69px] text-[45px] leading-[56px] font-semibold text-white"
        >
          <svg className="size-[48px]" viewBox="0 0 48 48" aria-hidden="true">
            <circle cx="24" cy="24" r="23.5" fill="#fff" />
            <path d="M19 15.5L33 24L19 32.5z" fill="#2ca84a" stroke="#2ca84a" strokeWidth="2" strokeLinejoin="round" />
          </svg>
          Start Trip
        </button>
        <MapPanel />
      </main>
      <TabBar />
    </div>
  );
}
